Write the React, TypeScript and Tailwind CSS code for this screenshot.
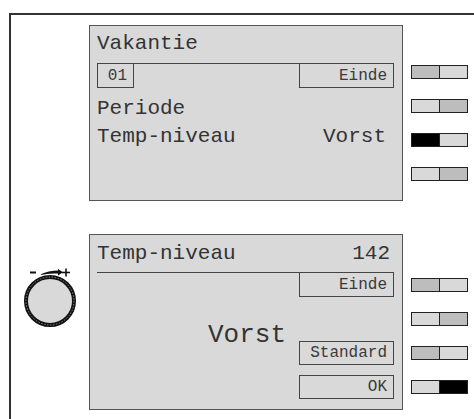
import * as React from 'react'

type Tone = 'light' | 'mid' | 'dark'

const toneClass: Record<Tone, string> = {
  light: 'bg-[#d9d9d9]',
  mid: 'bg-[#bdbdbd]',
  dark: 'bg-black'
}

function Bar({ left, right }: { left: Tone; right: Tone }) {
  return (
    <div className="flex h-[14px] w-[57px] border border-[#222]">
      <div className={`flex-1 ${toneClass[left]}`} />
      <div className={`flex-1 border-l border-[#222] ${toneClass[right]}`} />
    </div>
  )
}

function Box({ label, className = '' }: { label: string; className?: string }) {
  return (
    <div className={`flex h-[24px] items-center justify-end border-x border-b border-[#444] pr-[6px] text-[16px] text-[#3a3a3a] ${className}`}>
      {label}
    </div>
  )
}

function Knob() {
  return (
    <svg width="56" height="62" viewBox="0 0 56 62" className="ml-[11px] mt-[32px]">
      <line x1="8" y1="6.5" x2="14" y2="6.5" stroke="#111" strokeWidth="2" />
      <path d="M17 9 Q27 4.5 37 4.6 L37 7.6 Q27 7 17 9 Z" fill="#111" />
      <path d="M36 3 L41 6.2 L36 9.4 Z" fill="#111" />
      <line x1="40" y1="6.5" x2="48" y2="6.5" stroke="#111" strokeWidth="1.6" />
      <line x1="44" y1="2.5" x2="44" y2="10.5" stroke="#111" strokeWidth="1.6" />
      <circle cx="28" cy="35" r="24" fill="#d9d9d9" stroke="#111" strokeWidth="4" />
      <circle cx="28" cy="35" r="24" fill="none" stroke="#888" strokeWidth="1" strokeDasharray="1.5 1.5" />
    </svg>
  )
}

export default function App() {
  return (
    <div className="h-[419px] w-[474px] overflow-hidden bg-white pl-[9px] pt-[13px] font-['Liberation_Mono',monospace] text-[#333]">
      <div className="flex h-[420px] w-[480px] flex-col gap-[33px] border-l-2 border-t-2 border-[#333] pt-[10px]">
        {/* top screen */}
        <div className="flex">
          <div className="w-[78px]" />
          <div className="flex h-[176px] w-[314px] flex-col border border-[#555] bg-[#d9d9d9] pl-[7px] pr-[8px]">
            <div className="mt-[6px] text-[21px] leading-[24px]">Vakantie</div>
            <div className="mt-[7px] flex justify-between border-t border-[#444]">
              <Box label="01" className="w-[37px] text-[15px]" />
              <Box label="Einde" className="w-[95px]" />
            </div>
            <div className="mt-[7px] text-[21px] leading-[28px]">Periode</div>
            <div className="flex justify-between text-[21px] leading-[28px]">
              <span>Temp-niveau</span>
              <span className="mr-[8px]">Vorst</span>
            </div>
          </div>
          <div className="ml-[8px] mt-[40px] flex flex-col gap-[20px]">
            <Bar left="mid" right="light" />
            <Bar left="light" right="mid" />
            <Bar left="dark" right="light" />
            <Bar left="light" right="mid" />
          </div>
        </div>

        {/* bottom screen */}
        <div className="flex">
          <div className="w-[78px]">
            <Knob />
          </div>
          <div className="flex h-[176px] w-[314px] flex-col border border-[#555] bg-[#d9d9d9] pl-[7px] pr-[8px]">
            <div className="mt-[7px] flex justify-between text-[21px] leading-[24px]">
              <span>Temp-niveau</span>
              <span className="mr-[4px]">142</span>
            </div>
            <div className="mt-[6px] flex justify-end border-t border-[#444]">
              <Box label="Einde" className="w-[95px]" />
            </div>
            <div className="flex">
              <div className="flex-1 pr-[13px] pt-[23px] text-right text-[26px] leading-[30px]">Vorst</div>
              <div className="flex w-[95px] flex-col">
                <Box label="Standard" className="mt-[44px] border-t" />
                <Box label="OK" className="mt-[10px] border-t" />
              </div>
            </div>
          </div>
          <div className="ml-[8px] mt-[44px] flex flex-col gap-[20px]">
            <Bar left="mid" right="light" />
            <Bar left="light" right="mid" />
            <Bar left="mid" right="light" />
            <Bar left="light" right="dark" />
          </div>
        </div>
      </div>
    </div>
  )
}
